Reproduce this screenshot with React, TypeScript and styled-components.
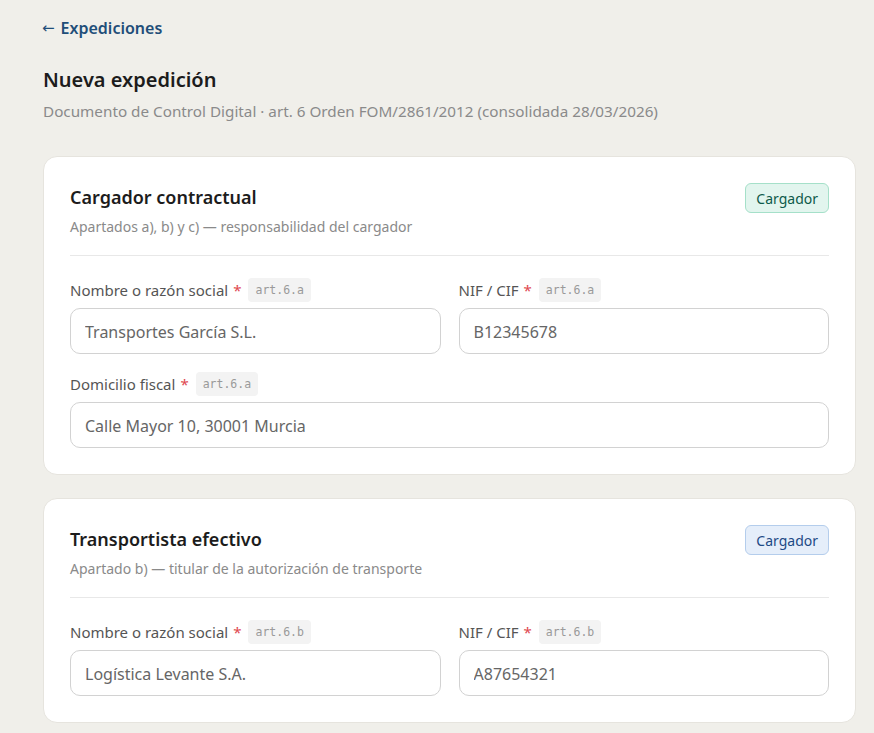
import React from "react";
import styled, { createGlobalStyle } from "styled-components";

const Global = createGlobalStyle`
  html, body { margin: 0; padding: 0; background: #f0efea; }
  body { font-family: "Noto Sans", "Open Sans", sans-serif; color: #1c1c1c; }
  * { box-sizing: border-box; }
`;

const Page = styled.div`
  padding: 16px 18px 40px 43px;
`;

const BackLink = styled.a`
  display: inline-flex;
  align-items: center;
  gap: 6px;
  color: #1f4e79;
  font-size: 16px;
  font-weight: 600;
  line-height: 24px;
  text-decoration: none;
`;

const Arrow = styled.span`
  font-family: "DejaVu Sans", sans-serif;
  font-weight: 400;
  font-size: 15px;
  margin-left: -1px;
`;

const Title = styled.h1`
  margin: 26px 0 0;
  font-size: 20px;
  font-weight: 600;
  line-height: 28px;
  color: #1c1c1c;
`;

const Subtitle = styled.p`
  margin: 6px 0 0;
  font-size: 15.25px;
  line-height: 22px;
  color: #8a8a8a;
`;

const Card = styled.section`
  margin-top: 34px;
  background: #fff;
  border: 1px solid #e6e4de;
  border-radius: 14px;
  padding: 26px;
  & + & { margin-top: 23px; }
`;

const CardHeader = styled.div`
  display: flex;
  justify-content: space-between;
  align-items: flex-start;
  padding-bottom: 18px;
  border-bottom: 1px solid #e8e8e8;
`;

const CardTitle = styled.h2`
  margin: 0;
  font-size: 18px;
  font-weight: 600;
  line-height: 28px;
  color: #1c1c1c;
`;

const CardSub = styled.p`
  margin: 6px 0 0;
  font-size: 14px;
  line-height: 20px;
  color: #8a8a8a;
`;

const Badge = styled.span<{ $tone: "green" | "blue" }>`
  display: inline-flex;
  align-items: center;
  height: 30px;
  padding: 0 10px;
  border-radius: 6px;
  font-size: 14px;
  border: 1px solid ${(p) => (p.$tone === "green" ? "#a5e0c9" : "#b4cdec")};
  background: ${(p) => (p.$tone === "green" ? "#e2f5ee" : "#e5eefa")};
  color: ${(p) => (p.$tone === "green" ? "#0e5a4a" : "#1e4a85")};
`;

const Grid = styled.div`
  display: grid;
  grid-template-columns: 1fr 1fr;
  column-gap: 18px;
  row-gap: 18px;
  margin-top: 22px;
`;

const Field = styled.div<{ $full?: boolean }>`
  display: flex;
  flex-direction: column;
  gap: 6px;
  grid-column: ${(p) => (p.$full ? "1 / -1" : "auto")};
`;

const LabelRow = styled.label`
  display: flex;
  align-items: center;
  height: 24px;
  font-size: 15px;
  color: #555;
`;

const Req = styled.span`
  color: #e0484f;
  margin-left: 5px;
`;

const Tag = styled.span`
  margin-left: 7px;
  height: 24px;
  display: inline-flex;
  align-items: center;
  padding: 0 7px;
  border-radius: 4px;
  background: #f3f3f3;
  color: #9a9a9a;
  font-family: "DejaVu Sans Mono", "Liberation Mono", monospace;
  font-size: 11.5px;
`;

const Input = styled.input`
  height: 46px;
  width: 100%;
  border: 1px solid #d2d2d2;
  border-radius: 10px;
  padding: 2px 14px 0;
  font-family: inherit;
  font-size: 16px;
  color: #666;
  background: #fff;
  outline: none;
`;

type F = { label: string; tag: string; value: string; full?: boolean };

function Section({ title, sub, tone, fields }: { title: string; sub: string; tone: "green" | "blue"; fields: F[] }) {
  return (
    <Card>
      <CardHeader>
        <div>
          <CardTitle>{title}</CardTitle>
          <CardSub>{sub}</CardSub>
        </div>
        <Badge $tone={tone}>Cargador</Badge>
      </CardHeader>
      <Grid>
        {fields.map((f) => (
          <Field key={f.label} $full={f.full}>
            <LabelRow>
              {f.label}
              <Req>*</Req>
              <Tag>{f.tag}</Tag>
            </LabelRow>
            <Input defaultValue={f.value} />
          </Field>
        ))}
      </Grid>
    </Card>
  );
}

export default function App() {
  return (
    <Page>
      <Global />
      <BackLink href="#">
        <Arrow>←</Arrow>
        Expediciones
      </BackLink>
      <Title>Nueva expedición</Title>
      <Subtitle>Documento de Control Digital · art. 6 Orden FOM/2861/2012 (consolidada 28/03/2026)</Subtitle>
      <Section
        title="Cargador contractual"
        sub="Apartados a), b) y c) — responsabilidad del cargador"
        tone="green"
        fields={[
          { label: "Nombre o razón social", tag: "art.6.a", value: "Transportes García S.L." },
          { label: "NIF / CIF", tag: "art.6.a", value: "B12345678" },
          { label: "Domicilio fiscal", tag: "art.6.a", value: "Calle Mayor 10, 30001 Murcia", full: true },
        ]}
      />
      <Section
        title="Transportista efectivo"
        sub="Apartado b) — titular de la autorización de transporte"
        tone="blue"
        fields={[
          { label: "Nombre o razón social", tag: "art.6.b", value: "Logística Levante S.A." },
          { label: "NIF / CIF", tag: "art.6.b", value: "A87654321" },
        ]}
      />
    </Page>
  );
}
